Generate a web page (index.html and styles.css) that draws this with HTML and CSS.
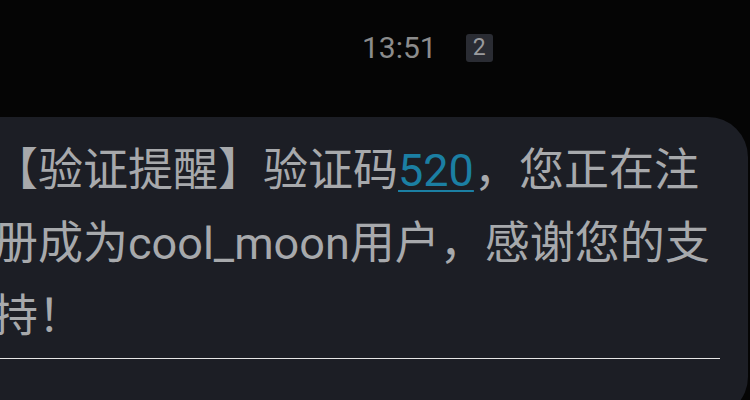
FILE: index.html
```html
<!DOCTYPE html>
<html lang="zh-CN">
<head>
<meta charset="utf-8">
<link rel="stylesheet" href="styles.css">
</head>
<body>
<div class="screen">
  <div class="header">
    <span class="time">13:51</span>
    <span class="sim">2</span>
  </div>
  <div class="bubble">
    <p class="msg">【验证提醒】验证码<a class="code">520</a>，您正在注册成为cool_moon用户，感谢您的支持！</p>
  </div>
</div>
</body>
</html>
```
FILE: styles.css
```css
html, body {
  margin: 0;
  padding: 0;
  background: #050505;
}
.screen {
  width: 750px;
  height: 400px;
  overflow: hidden;
  background: #050505;
  font-family: Roboto, "Noto Sans CJK SC", sans-serif;
}
.header {
  height: 117px;
  display: flex;
  align-items: flex-start;
  padding-left: 362px;
  box-sizing: border-box;
  padding-top: 31px;
}
.time {
  font-size: 30px;
  line-height: 34px;
  color: #8c8c8c;
}
.sim {
  margin-left: 29px;
  margin-top: 3px;
  width: 27px;
  height: 28px;
  border-radius: 3px;
  background: #2a2c33;
  color: #9a9b9e;
  font-size: 23px;
  line-height: 28px;
  text-align: center;
}
.bubble {
  margin-left: -44px;
  width: 792px;
  height: 300px;
  box-sizing: border-box;
  background: #1c1e25;
  border-radius: 40px;
  padding: 17px 28px 0 40px;
}
.msg {
  margin: 0;
  font-size: 45px;
  line-height: 73px;
  color: #a7a9ac;
  padding-bottom: 5px;
  border-bottom: 1.5px solid #e6e6e6;
  margin-left: -3px;
}
.code {
  color: #1b7fa3;
  text-decoration: underline;
  text-decoration-thickness: 2px;
  text-underline-offset: 4px;
}
```
